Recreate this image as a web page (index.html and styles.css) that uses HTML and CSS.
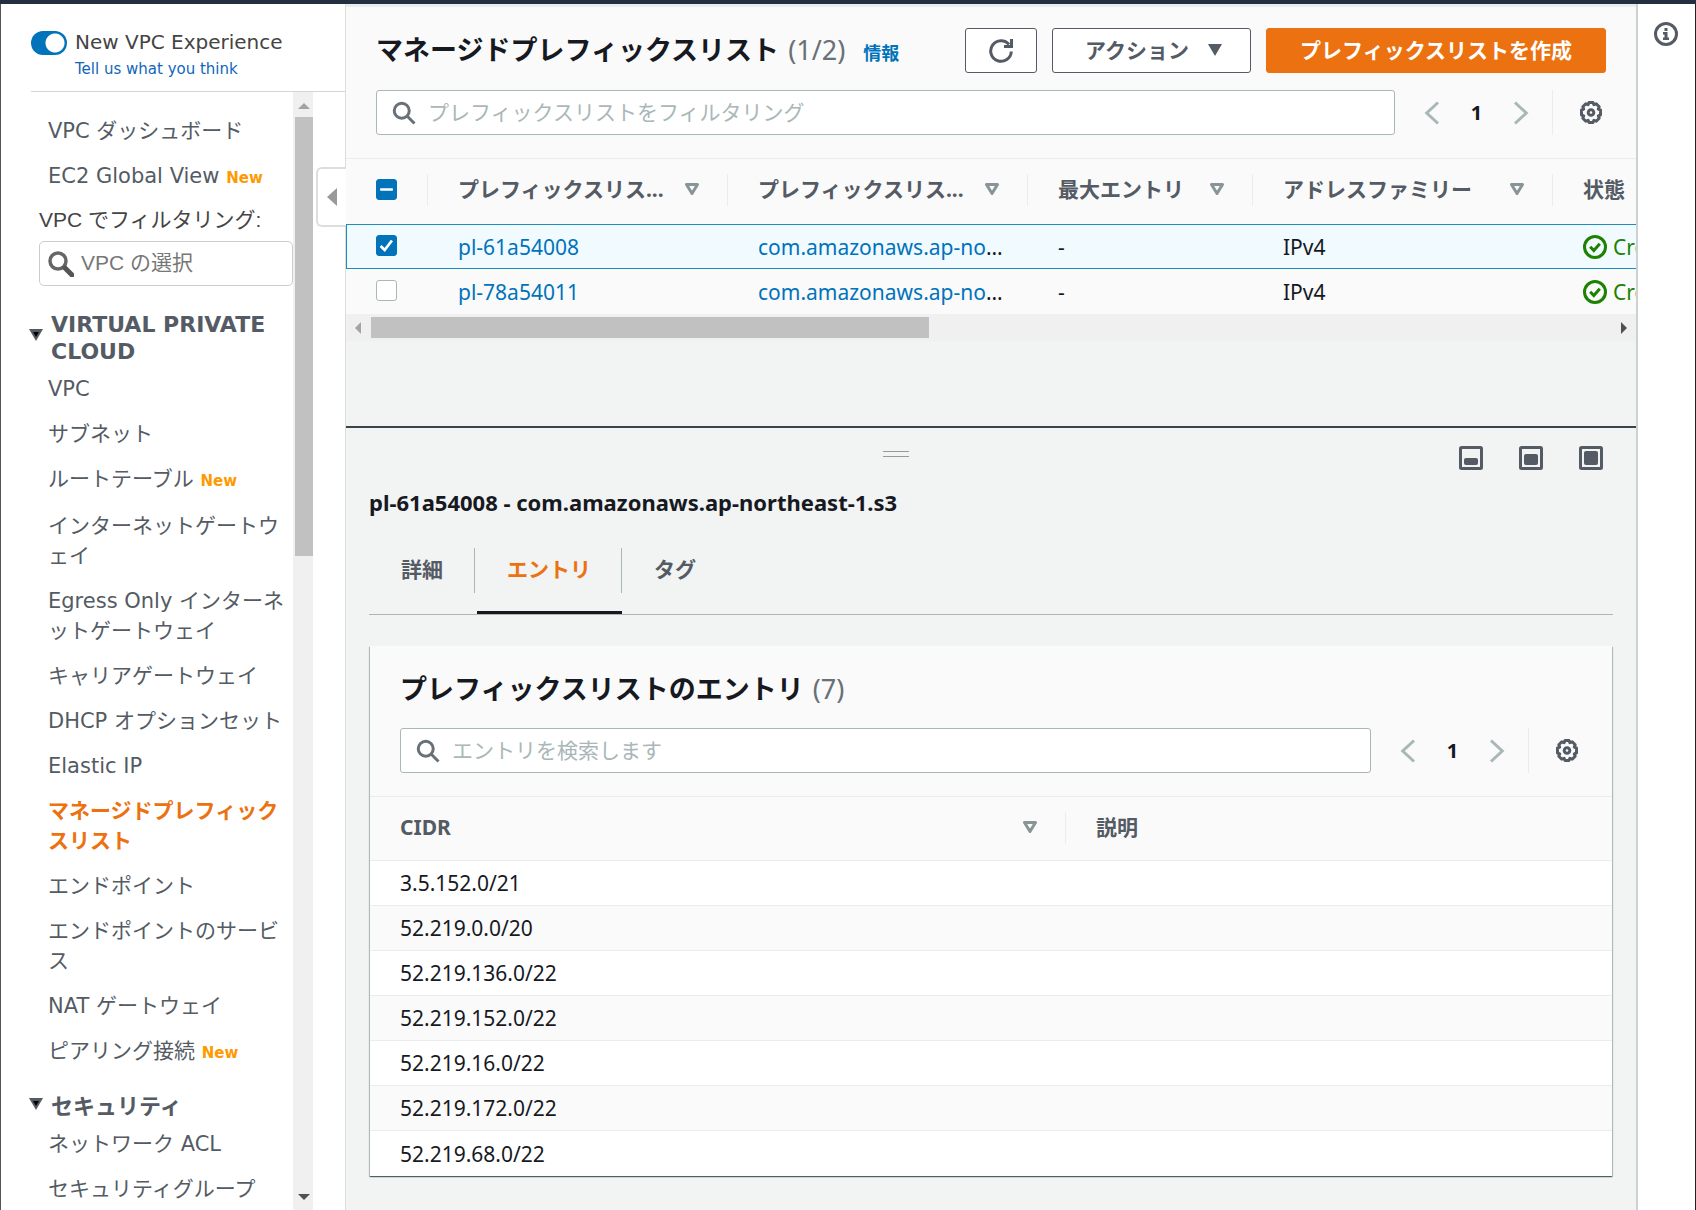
FILE: index.html
```html
<!DOCTYPE html>
<html lang="ja">
<head>
<meta charset="utf-8">
<title>マネージドプレフィックスリスト | VPC</title>
<link rel="stylesheet" href="styles.css">
</head>
<body>
<svg class="sprite" aria-hidden="true">
  <symbol id="search" viewBox="0 0 16 16"><circle cx="6.5" cy="6.5" r="5" fill="none" stroke="currentColor" stroke-width="2"/><path d="M10.2 10.2 15 15" stroke="currentColor" stroke-width="2" fill="none"/></symbol>
  <symbol id="prev" viewBox="0 0 16 16"><path d="M12 1 4.500 8l7.500 7" fill="none" stroke="currentColor" stroke-width="2"/></symbol>
  <symbol id="next" viewBox="0 0 16 16"><path d="m4 1 7.500 7L4 15" fill="none" stroke="currentColor" stroke-width="2"/></symbol>
  <symbol id="gear" viewBox="0 0 24 24"><path d="M10 1.500h4l.9 2.200 2.300-.9 3 3-.9 2.300 2.200.9v5l-2.200.9.9 2.300-3 3-2.300-.9-.9 2.200h-4l-.9-2.200-2.300.9-3-3 .9-2.300-2.200-.9V9l2.200-.9-.9-2.300 3-3 2.300.9z" fill="none" stroke="currentColor" stroke-width="3" stroke-linejoin="round"/><circle cx="12" cy="11.500" r="2.800" fill="none" stroke="currentColor" stroke-width="3"/></symbol>
  <symbol id="sort" viewBox="0 0 14 12"><path d="M1.500 1.500h11L7 10.500z" fill="none" stroke="currentColor" stroke-width="3" stroke-linejoin="round"/></symbol>
  <symbol id="ok" viewBox="0 0 16 16"><circle cx="8" cy="8" r="7" fill="none" stroke="currentColor" stroke-width="2"/><path d="m4.800 7.800 2.400 2.500 4-4.500" fill="none" stroke="currentColor" stroke-width="2"/></symbol>
</svg>

<div class="topbar"></div>
<div class="shell">
  <aside class="sidebar">
    <div class="experience">
      <input class="toggle" type="checkbox" role="switch" id="newexp" checked>
      <div class="experience-text">
        <label for="newexp">New VPC Experience</label>
        <a href="#feedback">Tell us what you think</a>
      </div>
    </div>
    <div class="navwrap">
      <nav class="nav">
        <ul class="links">
          <li><a href="#">VPC ダッシュボード</a></li>
          <li><a href="#">EC2 Global View</a> <span class="tag">New</span></li>
        </ul>
        <div class="filter">
          <label for="vpcfilter">VPC でフィルタリング:</label>
          <div class="filter-box">
            <svg viewBox="0 0 26 26"><circle cx="10" cy="10" r="8" fill="none" stroke="#666" stroke-width="3.500"/><path d="m17 17 7 7" stroke="#555" stroke-width="5" stroke-linecap="round"/></svg>
            <input id="vpcfilter" type="text" placeholder="VPC の選択">
          </div>
        </div>
        <h3 class="group"><svg viewBox="0 0 14 12"><path d="M0 0h14L7 12z" fill="#545b64"/><path d="M4 3h6L7 8z" fill="#000"/></svg><span>VIRTUAL PRIVATE CLOUD</span></h3>
        <ul class="links">
          <li><a href="#">VPC</a></li>
          <li><a href="#">サブネット</a></li>
          <li><a href="#">ルートテーブル</a> <span class="tag">New</span></li>
          <li><a href="#">インターネットゲートウェイ</a></li>
          <li><a href="#">Egress Only インターネットゲートウェイ</a></li>
          <li><a href="#">キャリアゲートウェイ</a></li>
          <li><a href="#">DHCP オプションセット</a></li>
          <li><a href="#">Elastic IP</a></li>
          <li><a href="#" class="current" aria-current="page">マネージドプレフィックスリスト</a></li>
          <li><a href="#">エンドポイント</a></li>
          <li><a href="#">エンドポイントのサービス</a></li>
          <li><a href="#">NAT ゲートウェイ</a></li>
          <li><a href="#">ピアリング接続</a> <span class="tag">New</span></li>
        </ul>
        <h3 class="group"><svg viewBox="0 0 14 12"><path d="M0 0h14L7 12z" fill="#545b64"/><path d="M4 3h6L7 8z" fill="#000"/></svg><span>セキュリティ</span></h3>
        <ul class="links">
          <li><a href="#">ネットワーク ACL</a></li>
          <li><a href="#">セキュリティグループ</a></li>
        </ul>
      </nav>
      <div class="vscroll">
        <svg viewBox="0 0 12 6"><path d="M0 6h12L6 0z" fill="#a3a3a3"/></svg>
        <div class="vthumb"></div>
        <svg class="down" viewBox="0 0 12 6"><path d="M0 0h12L6 6z" fill="#505050"/></svg>
      </div>
    </div>
    <button class="collapse" aria-label="ナビゲーションを閉じる"><svg viewBox="0 0 10 18"><path d="M10 0v18L0 9z" fill="#999"/></svg></button>
  </aside>

  <main class="main">
    <section class="list">
      <header class="head">
        <h1>マネージドプレフィックスリスト <span class="count">(1/2)</span></h1>
        <a class="info" href="#info">情報</a>
        <div class="actions">
          <button class="btn refresh" aria-label="更新"><svg viewBox="0 0 24 24"><path d="M22.300 12.500A10.300 10.300 0 1 1 20 5.500" fill="none" stroke="currentColor" stroke-width="3"/><path d="M21 0h3v9h-9V6h6z" fill="currentColor"/></svg></button>
          <button class="btn">アクション <svg class="caret" viewBox="0 0 14 12"><path d="M0 0h14L7 12z" fill="currentColor"/></svg></button>
          <button class="btn primary">プレフィックスリストを作成</button>
        </div>
      </header>
      <div class="tools">
        <div class="search"><svg><use href="#search"/></svg><input type="text" aria-label="フィルタ" placeholder="プレフィックスリストをフィルタリング"></div>
        <div class="pager"><button aria-label="前へ"><svg><use href="#prev"/></svg></button><span>1</span><button aria-label="次へ"><svg><use href="#next"/></svg></button></div>
        <button class="settings" aria-label="設定"><svg><use href="#gear"/></svg></button>
      </div>
      <div class="tablewrap">
        <table class="lists">
          <colgroup><col class="c-check"><col class="c-wide"><col class="c-wide"><col class="c-mid"><col class="c-wide"><col class="c-wide"></colgroup>
          <thead><tr>
            <th><div class="th"><input type="checkbox" class="box mixed" aria-label="すべて選択"></div></th>
            <th><div class="th"><span>プレフィックスリス...</span><svg><use href="#sort"/></svg></div></th>
            <th><div class="th"><span>プレフィックスリス...</span><svg><use href="#sort"/></svg></div></th>
            <th><div class="th"><span>最大エントリ</span><svg><use href="#sort"/></svg></div></th>
            <th><div class="th"><span>アドレスファミリー</span><svg><use href="#sort"/></svg></div></th>
            <th><div class="th"><span>状態</span></div></th>
          </tr></thead>
          <tbody>
            <tr class="selected">
              <td><input type="checkbox" class="box" checked aria-label="pl-61a54008"></td>
              <td><a href="#">pl-61a54008</a></td>
              <td><a href="#">com.amazonaws.ap-no</a>…</td>
              <td>-</td><td>IPv4</td>
              <td><span class="status"><svg><use href="#ok"/></svg>Create-complete</span></td>
            </tr>
            <tr>
              <td><input type="checkbox" class="box" aria-label="pl-78a54011"></td>
              <td><a href="#">pl-78a54011</a></td>
              <td><a href="#">com.amazonaws.ap-no</a>…</td>
              <td>-</td><td>IPv4</td>
              <td><span class="status"><svg><use href="#ok"/></svg>Create-complete</span></td>
            </tr>
          </tbody>
        </table>
      </div>
      <div class="hscroll">
        <svg viewBox="0 0 6 12"><path d="M6 0v12L0 6z" fill="#a3a3a3"/></svg>
        <div class="htrack"><div class="hthumb"></div></div>
        <svg viewBox="0 0 6 12"><path d="M0 0v12l6-6z" fill="#505050"/></svg>
      </div>
    </section>

    <section class="split">
      <div class="splitbar">
        <div class="grip"></div>
        <button aria-label="小"><svg viewBox="0 0 24 24"><rect x="1.500" y="1.500" width="21" height="21" rx="1" fill="none" stroke="currentColor" stroke-width="3"/><rect x="5" y="12" width="14" height="7" rx="2" fill="currentColor"/></svg></button>
        <button aria-label="中"><svg viewBox="0 0 24 24"><rect x="1.500" y="1.500" width="21" height="21" rx="1" fill="none" stroke="currentColor" stroke-width="3"/><rect x="5" y="8" width="14" height="11" rx="2" fill="currentColor"/></svg></button>
        <button aria-label="大"><svg viewBox="0 0 24 24"><rect x="1.500" y="1.500" width="21" height="21" rx="1" fill="none" stroke="currentColor" stroke-width="3"/><rect x="5" y="5" width="14" height="14" rx="2" fill="currentColor"/></svg></button>
      </div>
      <h2 class="detail-title">pl-61a54008 - com.amazonaws.ap-northeast-1.s3</h2>
      <div class="tabs" role="tablist">
        <button role="tab"><span>詳細</span></button>
        <button role="tab" class="active" aria-selected="true"><span>エントリ</span></button>
        <button role="tab"><span>タグ</span></button>
      </div>
      <div class="card">
        <h2>プレフィックスリストのエントリ <span class="count">(7)</span></h2>
        <div class="tools">
          <div class="search"><svg><use href="#search"/></svg><input type="text" aria-label="エントリ検索" placeholder="エントリを検索します"></div>
          <div class="pager"><button aria-label="前へ"><svg><use href="#prev"/></svg></button><span>1</span><button aria-label="次へ"><svg><use href="#next"/></svg></button></div>
          <button class="settings" aria-label="設定"><svg><use href="#gear"/></svg></button>
        </div>
        <table class="entries">
          <colgroup><col class="c-cidr"><col></colgroup>
          <thead><tr>
            <th><div class="th"><span>CIDR</span><svg><use href="#sort"/></svg></div></th>
            <th><div class="th"><span>説明</span></div></th>
          </tr></thead>
          <tbody>
            <tr><td>3.5.152.0/21</td><td></td></tr>
            <tr><td>52.219.0.0/20</td><td></td></tr>
            <tr><td>52.219.136.0/22</td><td></td></tr>
            <tr><td>52.219.152.0/22</td><td></td></tr>
            <tr><td>52.219.16.0/22</td><td></td></tr>
            <tr><td>52.219.172.0/22</td><td></td></tr>
            <tr><td>52.219.68.0/22</td><td></td></tr>
          </tbody>
        </table>
      </div>
    </section>
  </main>

  <aside class="help">
    <button aria-label="ヘルプ"><svg viewBox="0 0 24 24"><circle cx="12" cy="12" r="10.500" fill="none" stroke="currentColor" stroke-width="3"/><rect x="10.500" y="6" width="3" height="3" fill="currentColor"/><path d="M9 10h4.500v5.500H15V18H9v-2.500h1.500v-3H9z" fill="currentColor"/></svg></button>
  </aside>
</div>
</body>
</html>
```
FILE: styles.css
```css
:root {
  --ink: #16191f;
  --muted: #545b64;
  --soft: #687078;
  --link: #0073bb;
  --orange: #ec7211;
  --line: #eaeded;
  --field: #aab7b8;
  --verdana: "DejaVu Sans", "Noto Sans CJK JP", sans-serif;
  --ember: "Noto Sans", "Noto Sans CJK JP", sans-serif;
}

* { box-sizing: border-box; }

body {
  margin: 0;
  height: 100vh;
  overflow: hidden;
  display: flex;
  flex-direction: column;
  background: #fff;
  color: var(--ink);
  font: 21px/30px var(--ember);
}

h1, h2, h3, ul { margin: 0; padding: 0; }
ul { list-style: none; }
a { color: var(--link); text-decoration: none; }
button, input { font: inherit; color: inherit; margin: 0; }
button { background: none; border: 0; padding: 0; cursor: pointer; }
svg { display: block; flex: none; }
.sprite { position: absolute; width: 0; height: 0; }

.topbar { flex: none; height: 4px; background: #232f3e; }

.shell {
  flex: 1;
  min-height: 0;
  display: grid;
  grid-template-columns: 345px minmax(0, 1fr) 59px;
  border-left: 1px solid #555;
  border-right: 1px solid #222;
}

/* Side navigation */
.sidebar {
  position: relative;
  min-height: 0;
  display: flex;
  flex-direction: column;
  padding-left: 28px;
  border-right: 1px solid #ddd;
  font-family: var(--verdana);
}

.experience {
  flex: none;
  display: flex;
  gap: 8px;
  margin-left: 2px;
  padding: 26px 0 11px;
  border-bottom: 1px solid #d5d5d5;
}

.toggle {
  appearance: none;
  width: 36px;
  height: 24px;
  margin-top: 1px;
  border-radius: 12px;
  background: radial-gradient(circle at 24px 12px, #fff 9px, var(--link) 10px);
}

.experience-text { display: flex; flex-direction: column; gap: 4px; }
.experience-text label { font-size: 20px; line-height: 24px; color: #444; }
.experience-text a { font-size: 15px; line-height: 22px; color: #1166bb; }

.navwrap { flex: 1; min-height: 0; display: flex; overflow: hidden; }

.nav { flex: 1; min-width: 0; padding-top: 24px; overflow: hidden; }

.links {
  display: flex;
  flex-direction: column;
  gap: 15px;
  padding-left: 19px;
}
.links li { line-break: anywhere; }
.links a { color: var(--muted); }
.links .current { color: var(--orange); font-weight: 700; }
.tag { color: #ff9900; font-size: 15px; font-weight: 700; }

.filter { padding: 12px 0 0 10px; font-family: "Liberation Sans", "Noto Sans CJK JP", sans-serif; color: #444; }
.filter label { display: block; margin-bottom: 6px; }
.filter-box {
  display: flex;
  align-items: center;
  gap: 7px;
  height: 45px;
  padding-left: 8px;
  border: 1px solid #ccc;
  border-radius: 5px;
}
.filter-box svg { width: 26px; height: 26px; }
.filter-box input { flex: 1; min-width: 0; border: 0; padding: 0 0 2px; outline: 0; background: none; }
.filter-box input::placeholder { color: #777; }

.group {
  display: flex;
  align-items: center;
  gap: 8px;
  margin: 25px 0 9px;
  font-size: 22px;
  line-height: 27px;
  color: var(--muted);
}
.group svg { width: 14px; height: 12px; margin-bottom: 6px; }

.vscroll {
  flex: none;
  width: 20px;
  margin-right: 32px;
  padding: 11px 0 10px 2px;
  display: flex;
  flex-direction: column;
  align-items: center;
  background: #f0f0f0;
}
.vscroll svg { width: 12px; height: 6px; }
.vthumb { width: 18px; height: 40%; margin-top: 8px; background: #c1c1c1; }
.vscroll .down { margin-top: auto; }

.collapse {
  position: absolute;
  right: -1px;
  top: 163px;
  width: 30px;
  height: 60px;
  display: flex;
  align-items: center;
  padding-left: 9px;
  background: #fff;
  border: 2px solid #ddd;
  border-right: 0;
  border-radius: 6px 0 0 6px;
}
.collapse svg { width: 10px; height: 18px; }

/* Main area */
.main { display: flex; flex-direction: column; min-height: 0; background: #f2f3f3; overflow: hidden; }

.list { flex: none; padding-bottom: 85px; border-top: 3px solid var(--line); }

.head {
  display: flex;
  align-items: center;
  gap: 15px;
  padding: 21px 30px 17px;
  background: #fafafa;
}
h1, .card h2 { font-size: 27px; line-height: 36px; font-weight: 700; white-space: nowrap; }
h1 { padding-bottom: 2px; }
.count { color: var(--soft); font-weight: 400; padding-left: 2px; }
.info { font-size: 18px; font-weight: 700; padding: 4px 0 0 3px; }

.actions { margin-left: auto; display: flex; gap: 15px; }
.btn {
  display: flex;
  align-items: center;
  gap: 19px;
  height: 45px;
  padding: 0 28px 2px 32px;
  border: 1px solid var(--muted);
  border-radius: 3px;
  background: #fff;
  color: var(--muted);
  font-weight: 700;
  white-space: nowrap;
}
.refresh { padding: 0 23px; }
.refresh svg { width: 24px; height: 24px; }
.caret { width: 14px; height: 12px; }
.primary { padding: 0 33px 2px; background: var(--orange); border-color: var(--orange); color: #fff; }

.tools {
  display: flex;
  align-items: center;
  padding: 0 30px 23px;
  border-bottom: 1px solid var(--line);
  background: #fafafa;
}
.search {
  flex: 1;
  display: flex;
  align-items: center;
  gap: 12px;
  height: 45px;
  padding-left: 15px;
  border: 1px solid var(--field);
  border-radius: 3px;
  background: #fff;
}
.search svg { width: 24px; height: 24px; color: var(--soft); }
.search input { flex: 1; min-width: 0; padding: 0 0 2px; border: 0; outline: 0; background: none; }
.search input::placeholder { color: var(--field); }

.pager { display: flex; align-items: center; padding: 0 19px 0 25px; }
.pager span { width: 65px; text-align: center; font-size: 20px; font-weight: 700; }
.pager button { color: var(--field); }
.pager svg { width: 24px; height: 24px; }
.settings { height: 45px; padding: 0 3px 0 26px; border-left: 1px solid var(--line); color: var(--muted); }
.settings svg { width: 24px; height: 24px; }

table { table-layout: fixed; border-collapse: separate; border-spacing: 0; width: 100%; }
th, td { padding: 0; text-align: left; white-space: nowrap; overflow: hidden; }
th { background: #fafafa; color: var(--muted); font-weight: 700; }
td { padding-left: 30px; height: 45px; }
.th {
  display: flex;
  align-items: center;
  justify-content: space-between;
  height: 32px;
  margin: 15px 0 16px;
  padding: 0 28px 2px 30px;
  border-right: 1px solid var(--line);
}
.th svg { width: 14px; height: 12px; color: #879596; }
th:last-child .th { border-right: 0; }

.tablewrap { overflow: hidden; }
.lists { width: 1507px; }
.c-check { width: 82px; }
.c-wide { width: 300px; }
.c-mid { width: 225px; }
.lists th { padding-bottom: 2px; }
.lists td { background: #fafafa; }
.lists .selected td { background: #f1faff; border: 1px solid #1b8fb8; border-width: 1px 0; }
.lists .selected td:first-child { border-left-width: 1px; padding-left: 29px; }
.lists th:first-child .th { padding-right: 0; }

.box {
  appearance: none;
  display: block;
  flex: none;
  width: 21px;
  height: 21px;
  border: 1px solid var(--field);
  border-radius: 3px;
  background: #fff center / 100% no-repeat;
}
td .box { margin-bottom: 2px; }
.box:checked, .box.mixed { border-color: var(--link); background-color: var(--link); }
.box:checked { background-image: url("data:image/svg+xml,%3Csvg xmlns='http://www.w3.org/2000/svg' viewBox='0 0 21 21'%3E%3Cpath d='m4 11 4.500 4.500L16.500 5' fill='none' stroke='%23fff' stroke-width='3'/%3E%3C/svg%3E"); }
.box.mixed { background-image: url("data:image/svg+xml,%3Csvg xmlns='http://www.w3.org/2000/svg' viewBox='0 0 21 21'%3E%3Cpath d='M3.500 10.500h14' stroke='%23fff' stroke-width='3'/%3E%3C/svg%3E"); }

.status { display: flex; align-items: center; gap: 6px; color: #1d8102; }
.status svg { width: 24px; height: 24px; }

.hscroll { display: flex; align-items: center; gap: 10px; height: 27px; padding: 0 9px; background: #f0f0f0; }
.hscroll svg { width: 6px; height: 12px; }
.htrack { flex: 1; }
.hthumb { width: 45%; height: 21px; background: #c1c1c1; }

/* Split panel */
.split { flex: 1; min-height: 0; padding: 0 23px; border-top: 2px solid #3a444d; }
.splitbar { display: flex; align-items: center; gap: 36px; padding: 18px 10px 17px 0; color: var(--muted); }
.splitbar svg { width: 24px; height: 24px; }
.grip { width: 26px; height: 6px; margin: 0 auto 8px; border: 1px solid #999; border-width: 1px 0; }
.detail-title { font-size: 22px; line-height: 30px; font-weight: 700; }

.tabs { display: flex; gap: 2px; margin-top: 31px; border-bottom: 1px solid var(--field); }
.tabs button { height: 66px; padding-bottom: 18px; border-bottom: 3px solid transparent; color: var(--muted); font-weight: 700; }
.tabs span { display: block; padding: 6px 30px 9px; border-right: 1px solid var(--field); }
.tabs button:first-child span { padding: 6px 31px 9px 32px; }
.tabs button:last-child span { border-right: 0; }
.tabs .active { color: var(--orange); border-bottom-color: var(--ink); }

.card {
  margin: 31px 1px 0;
  background: #fafafa;
  box-shadow: 0 1px 1px rgba(0, 28, 36, .5), 1px 1px 1px rgba(0, 28, 36, .2), -1px 1px 1px rgba(0, 28, 36, .2);
}
.card h2 { padding: 25px 30px 21px; }
.c-cidr { width: 696px; }
.entries th { border-bottom: 1px solid var(--line); }
.entries td { background: #fff; border-bottom: 1px solid var(--line); }
.entries tr:nth-child(even) td { background: #fafafa; }
.entries tr:last-child td { border-bottom: 0; }

.help { padding: 18px 16px 0; border-left: 2px solid #ccd1d1; background: #fff; color: var(--muted); }
.help svg { width: 24px; height: 24px; }
```
